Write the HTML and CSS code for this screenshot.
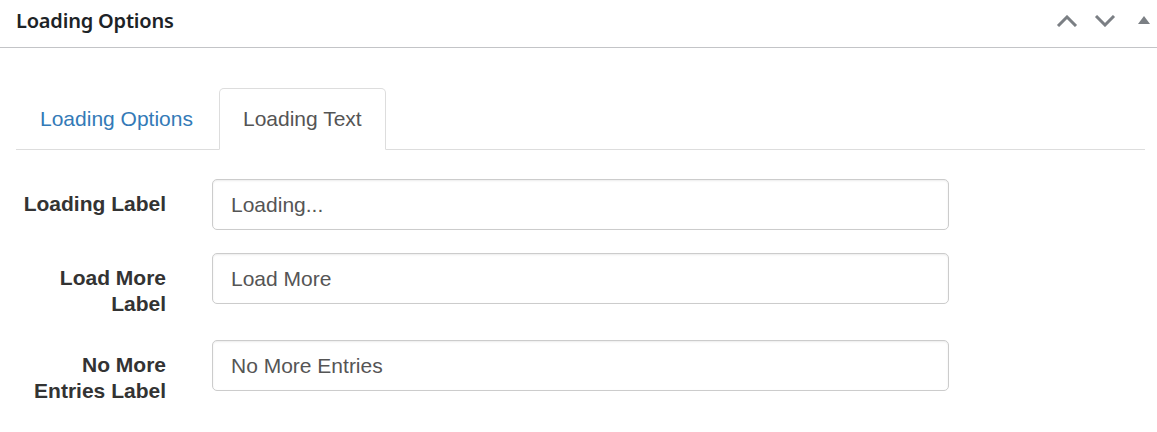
FILE: index.html
```html
<!DOCTYPE html>
<html>
<head>
<meta charset="utf-8">
<link rel="stylesheet" href="styles.css">
</head>
<body>
<div class="box">
  <div class="box-header">
    <h2 class="box-title">Loading Options</h2>
    <div class="box-actions">
      <span class="act">
        <svg width="22" height="12" viewBox="0 0 22 12"><path d="M2 11 L11 2 L20 11" fill="none" stroke="#7b7f84" stroke-width="3"/></svg>
      </span>
      <span class="act">
        <svg width="22" height="12" viewBox="0 0 22 12"><path d="M2 1 L11 10 L20 1" fill="none" stroke="#7b7f84" stroke-width="3"/></svg>
      </span>
      <span class="act small">
        <svg width="12" height="9" viewBox="0 0 12 9"><path d="M0 9 L6 1 L12 9 Z" fill="#7b7f84"/></svg>
      </span>
    </div>
  </div>
  <div class="box-body">
    <ul class="tabs">
      <li class="tab"><a class="tab-link">Loading Options</a></li>
      <li class="tab active"><a class="tab-link">Loading Text</a></li>
    </ul>
    <div class="form">
      <label class="label">Loading Label</label>
      <input class="field" type="text" value="Loading...">
      <label class="label">Load More<br>Label</label>
      <input class="field" type="text" value="Load More">
      <label class="label">No More<br>Entries Label</label>
      <input class="field" type="text" value="No More Entries">
    </div>
  </div>
</div>
</body>
</html>
```

FILE: styles.css
```css
* { box-sizing: border-box; }
html, body { margin: 0; padding: 0; background: #fff; }
body { font-family: "Liberation Sans", Arial, sans-serif; }

.box-header {
  height: 48px;
  border-bottom: 1px solid #c3c4c7;
  display: flex;
  align-items: center;
  justify-content: space-between;
  padding: 0 7px 0 16px;
}
.box-title {
  margin: 0;
  font-family: "Noto Sans", "Open Sans", sans-serif;
  font-weight: 600;
  font-size: 20px;
  color: #1d2327;
  letter-spacing: -0.2px;
  padding-bottom: 6px;
}
.box-actions {
  display: flex;
  align-items: center;
  gap: 16px;
  padding-bottom: 6px;
}
.act { display: flex; align-items: center; }
.act.small { margin-left: 6px; padding-bottom: 2px; }

.box-body { padding: 40px 12px 0 16px; }

.tabs {
  list-style: none;
  margin: 0;
  padding: 0;
  display: flex;
  border-bottom: 1px solid #ddd;
}
.tab { margin-bottom: -1px; margin-right: 2px; }
.tab-link {
  display: block;
  padding: 17px 23px 18px;
  font-size: 21px;
  line-height: 25px;
  color: #337ab7;
  border: 1px solid transparent;
  border-radius: 5px 5px 0 0;
}
.tab.active .tab-link {
  color: #555;
  background: #fff;
  border-color: #ddd #ddd transparent;
}

.form {
  display: grid;
  grid-template-columns: 150px 737px;
  column-gap: 46px;
  row-gap: 23px;
  margin-top: 29px;
  align-items: start;
}
.label {
  text-align: right;
  font-weight: bold;
  font-size: 21px;
  line-height: 26px;
  color: #333;
  padding-top: 12px;
}
.field {
  height: 51px;
  width: 100%;
  padding: 0 18px;
  font-family: "Liberation Sans", Arial, sans-serif;
  font-size: 21px;
  color: #555;
  border: 1px solid #ccc;
  border-radius: 5px;
  box-shadow: inset 0 1px 2px rgba(0,0,0,0.08);
  background: #fff;
}
```
